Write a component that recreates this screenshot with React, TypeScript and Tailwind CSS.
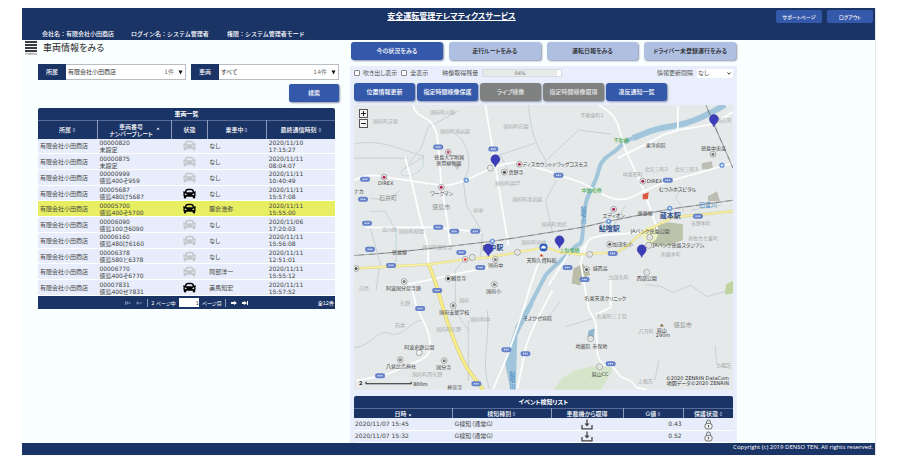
import React, { useState } from 'react';
import { FaCar } from 'react-icons/fa';

type Vehicle = {
  id: string;
  plate: string;
  active: boolean;
  driver: string;
  date: string;
  time: string;
  selected?: boolean;
};

const COMPANY = '有限会社小田商店';

const vehicles: Vehicle[] = [
  { id: '00000820', plate: '未設定', active: false, driver: 'なし', date: '2020/11/10', time: '17:15:27' },
  { id: '00000875', plate: '未設定', active: false, driver: 'なし', date: '2020/11/11', time: '08:04:07' },
  { id: '00000999', plate: '徳島400そ959', active: false, driver: 'なし', date: '2020/11/11', time: '10:40:49' },
  { id: '00005687', plate: '徳島480け5687', active: true, driver: 'なし', date: '2020/11/11', time: '15:57:08' },
  { id: '00005700', plate: '徳島400そ5700', active: true, driver: '藤倉浩弥', date: '2020/11/11', time: '15:55:00', selected: true },
  { id: '00006090', plate: '徳島100さ6090', active: false, driver: 'なし', date: '2020/11/06', time: '17:20:03' },
  { id: '00006160', plate: '徳島480け6160', active: false, driver: 'なし', date: '2020/11/11', time: '15:56:08' },
  { id: '00006378', plate: '徳島580と6378', active: false, driver: 'なし', date: '2020/11/11', time: '12:51:01' },
  { id: '00006770', plate: '徳島400そ6770', active: false, driver: '阿部洋一', date: '2020/11/11', time: '15:55:12' },
  { id: '00007831', plate: '徳島400せ7831', active: true, driver: '美馬知宏', date: '2020/11/11', time: '15:57:52' },
];

const events = [
  { date: '2020/11/07 15:45', type: 'G検知（通常G）', g: '0.43' },
  { date: '2020/11/07 15:32', type: 'G検知（通常G）', g: '0.52' },
];

const tabs = ['今の状況をみる', '走行ルートをみる', '運転日報をみる', 'ドライバー未登録運行をみる'];

const actions = [
  { label: '位置情報更新', enabled: true },
  { label: '指定時間映像保護', enabled: true },
  { label: 'ライブ映像', enabled: false },
  { label: '指定時間映像取得', enabled: false },
  { label: '違反通知一覧', enabled: true },
];

const SortIcon = ({ dir }: { dir?: 'up' | 'down' }) => (
  <svg viewBox="0 0 4 6" className="inline-block h-1.5 w-1 ml-px" aria-hidden="true">
    {dir !== 'down' && <path d="M2 0.4 3.6 2.5H0.4z" fill={dir ? '#fff' : '#8b9cc4'} />}
    {dir !== 'up' && <path d="M2 5.6 0.4 3.5h3.2z" fill={dir ? '#fff' : '#8b9cc4'} />}
  </svg>
);

const DownloadIcon = () => (
  <svg viewBox="0 0 12 11" className="mx-auto h-[11px] w-3" fill="none" stroke="#444" aria-hidden="true">
    <path d="M1 6v3.8h10V6" strokeWidth="1.3" />
    <path d="M6 0.5v5" strokeWidth="1.3" />
    <path d="M3.4 4.4h5.2L6 7.4z" fill="#444" stroke="none" />
  </svg>
);

const LockIcon = () => (
  <svg viewBox="0 0 10 12" className="mx-auto h-[11px] w-[9px]" fill="none" stroke="#555" strokeWidth="0.9" aria-hidden="true">
    <path d="M2.8 5V3.2a2.2 2.2 0 0 1 4.4 0V5" />
    <rect x="1" y="4.8" width="8" height="6.2" rx="2.6" fill="#f4f4f4" />
    <circle cx="5" cy="7.4" r="0.8" fill="#444" stroke="none" />
    <path d="M5 7.6v1.8" />
  </svg>
);

// Map drawing data, all in the map's own coordinate space
const whiteRoads = [
  'M413 105C415 117 428 117 432 124S437 133 438 145L441 185 447 220 450 246',
  'M354 180C365 174 378 174 392 178L440 185C450 186 462 182 474 176S500 163 517 162L545 170 582 183C596 189 604 198 617 199S635 194 645 190 662 182 672 180L732 163',
  'M405 157C410 175 414 190 418 210L428 247V264',
  'M485 105 493 153 500 197 508 245',
  'M366 227H437L482 232',
  'M598 105C610 112 614 116 617 124L625 150 643 190 657 230',
  'M617 158 645 144 662 135 677 130 712 124 732 112M677 130V106',
  'M543 250C532 275 526 300 520 318L507 355 493 388',
  'M552 290C540 312 530 330 525 348L517 388',
  'M586 243 580 262 583 280 588 308 595 322 597 355 602 364 612 366 620 376 630 380 636 387 646 389',
  'M595 314 610 307V275',
  'M408 284 473 270 494 266',
  'M412 288 416 305C422 318 430 332 430 344S424 358 410 364L383 375 356 380',
  'M570 250 548 285M579 252 590 238 602 235 640 232',
];

const thinRoads = [
  'M354 158H408M405 168 421 148 428 127 460 110M354 144C380 138 400 150 424 156L402 170',
  'M454 133C466 140 470 155 468 170L463 180 466 205 482 232 480 260',
  'M465 258 455 270V310L468 330',
  'M528 105C530 130 534 142 546 162M496 156 535 143M508 171 500 155',
  'M546 160 578 130 610 134M552 232 545 200 556 180',
  'M354 347C372 346 376 328 390 333S410 318 424 320',
  'M370 227 380 262 376 290M400 190 388 200 370 198',
  'M487 310C490 340 480 360 489 388M468 320V380',
  'M645 284 660 286 672 292 690 285 706 296 728 290',
  'M658 360 654 380M714 345 716 364 730 368M565 326 592 318M560 300 546 320',
  'M678 192C670 200 684 204 682 212M690 210 720 205M625 205 610 230',
];

const grayLabels: [number, number, string][] = [
  [430, 114, '国府町川原'], [373, 123, '国府町芝原'], [440, 133, '国府町南岩延'], [503, 128, '国府町花園'],
  [495, 185, '国府町井戸'], [512, 201, '国府町北岩延'], [473, 212, '府中'], [382, 231, '高川原'],
  [399, 233, '国府町桜間'], [422, 249, '国府町観音寺'], [521, 244, '国府町府中'],
  [580, 117, '不動東町1'], [622, 176, '中島田町'], [644, 171, '北矢三町2'], [674, 171, '北矢三町3'],
  [541, 226, '国府町池尻'], [690, 225, '吉野本町'], [687, 240, '南佐古七番町'], [660, 256, '南蔵本町'],
  [400, 304, '矢野'], [359, 290, '白鳥'], [395, 326, '石井'], [436, 330, '国府町矢野'], [470, 320, '国府町中'],
  [412, 375, '国府町西矢野'], [608, 279, '加茂名町'], [596, 317, '名東町三丁目'], [638, 332, '八万町'],
  [637, 382, '上福万'], [715, 366, '上福万'], [716, 122, '南庄町'], [459, 301, '国府'],
];

const darkLabels: [number, number, string][] = [
  [434, 159, '徳島大学附属'], [436, 165, '薬用植物園'], [430, 195, 'ワークマン'], [378, 185, 'DIREX'],
  [354, 193, 'ナカ'], [522, 166, 'ディスカウントドラッグコスモス'], [508, 174, '真野寺'],
  [645, 147, '東洋病院'], [700, 150, '徳島中央高'], [646, 183, 'DIREX'], [658, 191, 'むつみホスピタル'],
  [602, 217, 'エディオン'], [637, 215, '徳島線'], [392, 254, '徳島線'], [630, 233, 'JAバンク徳島公園'],
  [612, 246, '加茂名小'], [652, 247, 'JAバンク徳島スタジアム'], [526, 262, '天狗久資料館'],
  [488, 267, '国府中'], [451, 280, '観音寺'], [386, 290, '阿波国分尼寺跡'], [486, 293, '国府小'],
  [439, 313, '国府支援学校'], [523, 319, 'そよかぜ病院'], [404, 348, '阿波史跡公園'],
  [386, 367, '八倉比売神社'], [436, 368, '国分寺'], [447, 388, '神宮寺'], [592, 270, '城西高'],
  [584, 299, '名東天満クリニック'], [636, 280, '西部公園'], [575, 347, '地蔵院 市保地'], [591, 375, '眉山CC'],
  [656, 331, '眉山'], [655, 336, '290m'],
];

const stations: [number, number, string][] = [[598, 231, '鮎喰駅'], [659, 218, '蔵本駅'], [482, 250, '府中駅']];

const shields = [
  [438, 147], [493, 149], [365, 179], [363, 199], [367, 223], [438, 227], [454, 231], [475, 231], [370, 249],
  [391, 265], [437, 290], [420, 308], [480, 267], [461, 252], [380, 375], [476, 383], [506, 349], [525, 353],
  [558, 175], [667, 180], [697, 216], [612, 253], [567, 267], [584, 279], [610, 363],
];

const facilities: [number, number, string][] = [
  [448, 152, '#c04060'], [384, 177, '#b02050'], [441, 187, '#b02050'], [519, 164, '#b02050'], [504, 172, '#444'],
  [642, 181, '#b02050'], [613, 209, '#b02050'], [712, 154, '#777'], [609, 244, '#555'], [404, 281, '#777'],
  [448, 278, '#222'], [495, 259, '#777'], [494, 284, '#777'], [453, 305, '#777'], [419, 352, '#eee'],
  [400, 359, '#777'], [444, 360, '#777'], [586, 269, '#555'], [646, 272, '#ddd'], [590, 338, '#ddd'],
  [599, 366, '#ddd'], [490, 168, '#ddd'], [517, 252, '#ddd'], [472, 257, '#ddd'], [465, 259, '#e05050'],
  [356, 268, '#555'], [589, 254, '#ddd'], [649, 237, '#ddd'], [648, 245, '#ddd'],
];

const pins = [[495, 160], [713, 120], [559, 241], [488, 249], [641, 250]];

const MapDrawing = () => (
  <svg viewBox="354 105 378 284" className="block w-full" role="img" aria-label="地図">
    <rect x="354" y="105" width="378" height="284" fill="#e5e9ea" />
    <path d="M553 389 562 377 576 369 600 364 612 363 611 371 600 389z" fill="#d5e5c9" />
    <path d="M725 284 732 280V293L724 294z" fill="#bfd39c" />
    <path d="M573 268 582 263 590 274 580 279V285L571 283z" fill="#bbbda9" />
    <path d="M646 228 668 222 682 224V240L664 246 646 243z" fill="#bac2aa" />
    <circle cx="649" cy="234" r="8" fill="#edf2c4" />
    <path d="M701 163 711 161 712 169H701zM707 196 716 191 719 201H707z" fill="#bcbdb4" />
    <path d="M452 163 461 163 457 170z" fill="#c3c5c5" />
    <path d="M588 330 594 328 593 338 587 336z" fill="#8fb6d0" />

    <g fill="none" stroke="#a1c5da" strokeLinecap="butt">
      <path d="M724 105C712 112 700 119 685 123S660 127 650 131L632 138" strokeWidth="6" />
      <path d="M632 138C622 141 619 148 613 152S600 160 598 170 590 190 587 197 583 218 582 233 577 242 573 248" strokeWidth="4" />
      <path d="M573 248C562 260 552 266 545 275L531 302 516 328" strokeWidth="4" />
    </g>
    <path d="M529 303 516 324 509 345 505 364 510 389H515L516 365 517 335 533 304z" fill="#a1c5da" />
    <path d="M370 211H385L396 230V262M402 170C396 180 420 176 423 165V155" fill="none" stroke="#b5ced4" strokeWidth="0.7" />

    <g fill="none" stroke="#c2cbcc" strokeWidth="0.8">
      {thinRoads.map((d) => <path key={d} d={d} />)}
    </g>
    <g fill="none" stroke="#fdfefe" strokeWidth="1.8" strokeLinejoin="round">
      {whiteRoads.map((d) => <path key={d} d={d} />)}
    </g>

    <g fill="none" strokeLinejoin="round">
      <path d="M354 268 390 266 428 264 465 259 488 257 517 252 545 247 560 252 578 254 612 252C630 249 634 234 648 229L672 217 732 211" stroke="#d9cf7e" strokeWidth="2.4" />
      <path d="M428 263C436 280 440 300 446 318S458 352 467 368L483 389" stroke="#cfc66f" strokeWidth="3.6" />
      <path d="M354 268 390 266 428 264 465 259 488 257 517 252 545 247 560 252 578 254 612 252C630 249 634 234 648 229L672 217 732 211" stroke="#faf0a4" strokeWidth="1.6" />
      <path d="M428 263C436 280 440 300 446 318S458 352 467 368L483 389" stroke="#f8ee8c" strokeWidth="2.6" />
    </g>
    <g fill="none" stroke="#777">
      <path d="M354 255 393 252 450 246 492 241 550 232 582 227 608 221 668 209 732 200" />
      <path d="M705 105 715 129 732 168" />
    </g>
    <g fill="none" stroke="#e5e9ea" strokeWidth="0.5" strokeDasharray="5 5">
      <path d="M354 255 393 252 450 246 492 241 550 232 582 227 608 221 668 209 732 200" />
      <path d="M705 105 715 129 732 168" />
    </g>

    {shields.map(([x, y]) => (
      <g key={`${x}-${y}`}>
        <rect x={x - 5} y={y - 2.5} width="10" height="5" rx="2.3" fill="#6480c8" />
        <path d={`M${x - 2.5} ${y}h5`} stroke="#d5def4" strokeWidth="1.6" strokeDasharray="1.2 0.6" />
      </g>
    ))}
    {facilities.map(([x, y, color]) => (
      <g key={`${x}-${y}`}>
        <circle cx={x} cy={y} r="2.9" fill="#f6f6f6" stroke="#777" strokeWidth="0.6" />
        <circle cx={x} cy={y} r="1.5" fill={color} />
      </g>
    ))}
    {[[466, 180], [492, 241], [608, 221], [669, 208], [721, 165]].map(([x, y]) => (
      <g key={`${x}-${y}`}>
        <circle cx={x} cy={y} r="2.6" fill="#6d9bdc" />
        <circle cx={x} cy={y} r="1" fill="#fff" />
      </g>
    ))}
    <circle cx="543" cy="247" r="4" fill="#2a5cc0" />
    <path d="M540.5 248c0-3.500 5-3.500 5 0z" fill="#fff" />
    <path d="M642 194 648 192 647 199 642 199z" fill="#dc5a40" />
    <path d="M541 253 543 256H539z" fill="#d05030" />
    <path d="M661 323 663 326H659z" fill="#7a6a30" />

    <g fontSize="5" fill="#a5a8a8">
      {grayLabels.map(([x, y, t]) => <text key={`${x}-${y}`} x={x} y={y}>{t}</text>)}
    </g>
    <g fontSize="5" fill="#474747">
      {darkLabels.map(([x, y, t]) => <text key={`${x}-${y}`} x={x} y={y}>{t}</text>)}
    </g>
    <g fontSize="6" fill="#8c8f8f">
      <text x="379" y="200">石井町</text>
      <text x="432" y="209">徳島市</text>
      <text x="673" y="326">徳島市</text>
    </g>
    <g fontSize="5" fill="#3ba63b">
      <text x="613" y="142">不動橋</text>
      <text x="581" y="192">中鮎喰橋</text>
      <text x="559" y="252">上鮎喰橋</text>
    </g>
    <g fontSize="6" fill="#4689c4">
      <text x="698" y="207">田宮川</text>
      <text x="580" y="211">鮎</text>
      <text x="580" y="217">喰</text>
      <text x="580" y="223">川</text>
      <text x="509" y="375">鮎</text>
      <text x="509" y="381">喰</text>
      <text x="509" y="387">川</text>
    </g>
    <g fontSize="7" fontWeight="700" fill="#30508e">
      {stations.map(([x, y, t]) => <text key={t} x={x} y={y}>{t}</text>)}
    </g>

    {pins.map(([x, y]) => (
      <path
        key={`${x}-${y}`}
        d={`M${x} ${y + 7}c-1-3.500-4.500-4.500-4.500-8a4.500 4.500 0 0 1 9 0c0 3.500-3.500 4.500-4.500 8z`}
        fill="#3b3db9"
        stroke="#2b2c8c"
        strokeWidth="0.4"
      />
    ))}

    <path d="M366 381v2h45v-2" fill="none" stroke="#222" strokeWidth="1" />
    <text x="359" y="384" fontSize="5" fontWeight="700" fill="#222">2</text>
    <text x="413" y="385" fontSize="5" fill="#222">800m</text>
    <text x="728" y="379" fontSize="5" textAnchor="end" fill="#333">©2020 ZENRIN DataCom</text>
    <text x="728" y="384" fontSize="5" textAnchor="end" fill="#333">地図データ©2020 ZENRIN</text>
  </svg>
);

const FilterSelect = ({ id, label, value, count }: { id: string; label: string; value: string; count: string }) => (
  <div className="flex h-4 flex-1 border border-[#b9bdc2] bg-white">
    <label htmlFor={id} className="-my-px -ml-px flex w-7 items-center justify-center bg-[#1b3466] font-medium text-white">
      {label}
    </label>
    <select id={id} className="min-w-0 flex-1 appearance-none bg-transparent px-0.5 text-[#333] outline-none">
      <option>{value}</option>
    </select>
    <span className="flex items-center gap-1 pr-0.5 text-[#777]">
      {count}
      <svg viewBox="0 0 5 5" className="h-[5px] w-[5px]" aria-hidden="true"><path d="M0.500 0.500h4L2.500 4.500z" fill="#111" /></svg>
    </span>
  </div>
);

const VehicleTable = () => (
  <section className="mt-1.5 mr-[15px] ml-4">
    <h2 className="flex h-3 items-center justify-center rounded-t-[2px] bg-[#1b3466] font-bold text-white">車両一覧</h2>
    <table className="h-44 w-full table-fixed border-collapse text-left">
      <thead>
        <tr className="h-[18px] border-t border-[#5a6c95] bg-[#1b3466] text-center leading-[7px] text-white">
          <th className="w-[20%] font-medium">所属<SortIcon /></th>
          <th className="w-[25%] border-l border-[#8d9abb] font-medium">
            <span className="flex items-center justify-center gap-0.5">
              <span>車両番号<br />ナンバープレート</span>
              <SortIcon dir="up" />
            </span>
          </th>
          <th className="w-[12%] border-l border-[#8d9abb] font-medium">状態</th>
          <th className="w-[20%] border-l border-[#8d9abb] font-medium">乗車中<SortIcon /></th>
          <th className="w-[23%] border-l border-[#8d9abb] font-medium">最終通信時刻<SortIcon /></th>
        </tr>
      </thead>
      <tbody className="leading-[7px] text-[#444]">
        {vehicles.map((v) => (
          <tr key={v.id} className={v.selected ? 'border-b border-white bg-[#e8ee62]' : 'border-b border-white bg-[#e7edfa]'}>
            <td className="pl-0.5 whitespace-nowrap">{COMPANY}</td>
            <td className="pl-0.5 whitespace-nowrap">{v.id}<br />{v.plate}</td>
            <td>
              <FaCar className={v.active ? 'mx-auto h-[13px] w-[13px] text-black' : 'mx-auto h-[13px] w-[13px] text-[#c3c9cb]'} />
            </td>
            <td className="pl-0.5">{v.driver}</td>
            <td className="pl-0.5 whitespace-nowrap">{v.date}<br />{v.time}</td>
          </tr>
        ))}
      </tbody>
    </table>
    <div className="grid h-[13px] grid-cols-[1fr_auto_1fr] items-center bg-[#1b3466] text-[5px] text-white">
      <span />
      <div className="flex items-center gap-[3px]">
        <button type="button" aria-label="最初のページ" className="mr-0.5">
          <svg viewBox="0 0 6 4" className="h-1 w-1.5" fill="#7586ae"><path d="M0 0h1v4H0zM1 2l2-2v4zM3 1.500h3v1H3z" /></svg>
        </button>
        <button type="button" aria-label="前のページ" className="mr-0.5">
          <svg viewBox="0 0 6 4" className="h-1 w-1.5" fill="#7586ae"><path d="M0 2l2-2v4zM2 1.500h4v1H2z" /></svg>
        </button>
        <span className="h-2 w-px bg-[#8d9abb]" />
        <label htmlFor="page" className="whitespace-nowrap">2 ページ中</label>
        <input id="page" defaultValue="1" className="h-[9px] w-5 bg-white text-right text-[#333]" />
        <span className="whitespace-nowrap">ページ目</span>
        <span className="h-2 w-px bg-[#8d9abb]" />
        <button type="button" aria-label="次のページ" className="mx-0.5">
          <svg viewBox="0 0 6 4" className="h-1 w-1.5" fill="#fff"><path d="M6 2l-3-2v4zM0 1h3v2H0z" /></svg>
        </button>
        <button type="button" aria-label="最後のページ">
          <svg viewBox="0 0 6 4" className="h-1 w-1.5" fill="#fff"><path d="M5 0h1v4H5zM5 2l-3-2v4zM0 1h2v2H0z" /></svg>
        </button>
      </div>
      <span className="pr-px text-right font-medium">全12件</span>
    </div>
  </section>
);

const EventTable = () => (
  <section className="mt-1.5">
    <h2 className="flex h-3 items-center justify-center rounded-t-[2px] bg-[#1b3466] font-bold text-white">イベント検知リスト</h2>
    <table className="w-full table-fixed border-collapse">
      <thead>
        <tr className="h-2.5 border-t border-[#5a6c95] bg-[#1b3466] leading-[8px] text-white">
          <th className="w-[26%] font-medium">日時<SortIcon dir="down" /></th>
          <th className="w-[26%] border-l border-[#8d9abb] font-medium">検知種別<SortIcon /></th>
          <th className="w-[19%] border-l border-[#8d9abb] font-medium">車載機から取得</th>
          <th className="w-[16%] border-l border-[#8d9abb] font-medium">G値<SortIcon /></th>
          <th className="w-[13%] border-l border-[#8d9abb] font-medium">保護状態<SortIcon /></th>
        </tr>
      </thead>
      <tbody className="text-[#444]">
        {events.map((ev) => (
          <tr key={ev.date} className="h-3 border-b border-white bg-[#e7edfa]">
            <td className="pl-px whitespace-nowrap">{ev.date}</td>
            <td className="pl-0.5 whitespace-nowrap">{ev.type}</td>
            <td><button type="button" aria-label="取得" className="block w-full"><DownloadIcon /></button></td>
            <td className="pr-0.5 text-right">{ev.g}</td>
            <td><LockIcon /></td>
          </tr>
        ))}
      </tbody>
    </table>
  </section>
);

export default function App() {
  const [tab, setTab] = useState(0);

  return (
    <div className="min-h-screen bg-white pt-2 pr-[29px] pl-[22px] text-[6px] leading-[8px] [font-family:'DejaVu_Sans','Noto_Sans_CJK_JP',sans-serif] [font-feature-settings:'palt']" lang="ja">
      <div className="bg-[#f9feff] shadow-[1px_0_1px_#e4e8ec]">
        <header className="bg-[#1b3466] pt-0.5 pr-0.5 text-white">
          <div className="grid grid-cols-[1fr_auto_1fr] items-center pl-2">
            <span />
            <h1 className="text-[8px] leading-[13px] font-bold underline">安全運転管理テレマティクスサービス</h1>
            <div className="flex justify-end gap-[5px]">
              <button type="button" className="h-[13px] w-[46px] rounded-[2px] bg-[#3458aa] text-[5px] font-medium">サポートページ</button>
              <button type="button" className="h-[13px] w-[46px] rounded-[2px] bg-[#3458aa] text-[5px] font-medium">ログアウト</button>
            </div>
          </div>
          <div className="mt-1 flex h-[13px] items-center pl-5 font-medium whitespace-nowrap [font-feature-settings:normal]">
            <span className="w-[89px]">会社名：{COMPANY}</span>
            <span className="w-24">ログイン名：システム管理者</span>
            <span>権限：システム管理者モード</span>
          </div>
        </header>

        <main className="grid grid-cols-[328fr_387fr_138fr]">
          <div>
            <div className="flex h-4 items-center gap-1.5 pl-[3px]">
              <button type="button" className="flex w-3 flex-col items-center text-[4px] leading-[4px] text-[#555]">
                <svg viewBox="0 0 12 11" className="h-[11px] w-3" fill="#3a3a40" aria-hidden="true">
                  <path d="M0 0h12v2H0zM0 3h12v2H0zM0 6h12v2H0zM0 9h12v2H0z" />
                </svg>
                menu
              </button>
              <h2 className="text-[9px] leading-[14px] text-[#222]">車両情報をみる</h2>
            </div>

            <form className="mt-2 mr-[11px] ml-4" onSubmit={(e) => e.preventDefault()}>
              <div className="flex gap-[5px]">
                <FilterSelect id="group" label="所属" value={COMPANY} count="1件" />
                <FilterSelect id="vehicle" label="車両" value="すべて" count="14件" />
              </div>
              <button type="submit" className="mt-1 ml-auto block h-[18px] w-[50px] rounded-[2px] bg-[#3458aa] font-medium text-white shadow-[1px_1px_2px_#8a93a8]">
                検索
              </button>
            </form>

            <VehicleTable />
          </div>

          <div>
            <nav className="flex gap-1.5 px-px pt-0.5">
              {tabs.map((label, i) => (
                <button
                  key={label}
                  type="button"
                  onClick={() => setTab(i)}
                  className={
                    tab === i
                      ? 'h-[18px] flex-1 rounded-[3px] bg-[#3458aa] font-medium whitespace-nowrap text-white shadow-[1px_1px_2px_#8a93a8]'
                      : 'h-[18px] flex-1 rounded-[3px] bg-[#afbfe1] font-medium whitespace-nowrap text-[#222] shadow-[1px_1px_2px_#8a93a8]'
                  }
                >
                  {label}
                </button>
              ))}
            </nav>

            <div className="mt-1.5 bg-[#e8eefb] px-1">
              <div className="flex h-3.5 items-center whitespace-nowrap text-[#555]">
                <input id="balloon" type="checkbox" className="h-1.5 w-1.5 appearance-none rounded-[1px] border border-[#888] bg-white" />
                <label htmlFor="balloon" className="ml-[3px]">吹き出し表示</label>
                <input id="all" type="checkbox" className="ml-1 h-1.5 w-1.5 appearance-none rounded-[1px] border border-[#888] bg-white" />
                <label htmlFor="all" className="ml-[3px]">全表示</label>
                <span className="ml-3.5">映像取得残量</span>
                <div className="ml-1 h-2 w-20 border border-[#d5dada] bg-white">
                  <div className="flex h-full w-[94%] items-center justify-center bg-[#e6ebe9] text-[5px] text-[#777]">94%</div>
                </div>
                <label htmlFor="interval" className="ml-auto">情報更新間隔</label>
                <div className="ml-1 flex h-[9px] w-9 items-center bg-white pr-0.5">
                  <select id="interval" className="min-w-0 flex-1 appearance-none bg-transparent pl-px leading-[8px] outline-none">
                    <option>なし</option>
                  </select>
                  <svg viewBox="0 0 4 3" className="h-[3px] w-1" fill="none" stroke="#333" aria-hidden="true"><path d="M0.400 0.500 2 2.200 3.600 0.500" /></svg>
                </div>
              </div>

              <div className="mt-[3px] flex gap-0.5">
                {actions.map((a) => (
                  <button
                    key={a.label}
                    type="button"
                    disabled={!a.enabled}
                    className={
                      a.enabled
                        ? 'h-[18px] w-[61px] rounded-[3px] bg-[#3458aa] font-medium whitespace-nowrap text-white shadow-[1px_1px_2px_#8a93a8]'
                        : 'h-[18px] w-[61px] rounded-[3px] bg-[#7f8080] font-medium whitespace-nowrap text-[#e4e4e4] shadow-[1px_1px_2px_#8a93a8]'
                    }
                  >
                    {a.label}
                  </button>
                ))}
              </div>

              <div className="relative mt-1">
                <MapDrawing />
                <div className="absolute top-1 left-[5px] flex flex-col gap-px">
                  <button type="button" aria-label="拡大" className="h-[9px] w-[9px] border border-[#555] bg-[#f4f4f4]">
                    <svg viewBox="0 0 7 7" stroke="#222"><path d="M1 3.500h5M3.500 1v5" /></svg>
                  </button>
                  <button type="button" aria-label="縮小" className="h-[9px] w-[9px] border border-[#555] bg-[#f4f4f4]">
                    <svg viewBox="0 0 7 7" stroke="#222"><path d="M1 3.500h5" /></svg>
                  </button>
                </div>
              </div>

              <EventTable />
            </div>
          </div>
        </main>

        <footer className="h-3 bg-[#1b3466] pr-0.5 text-right leading-[9px] text-white [font-family:'Open_Sans',sans-serif]">
          Copyright (c) 2019 DENSO TEN. All rights reserved.
        </footer>
      </div>
    </div>
  );
}
